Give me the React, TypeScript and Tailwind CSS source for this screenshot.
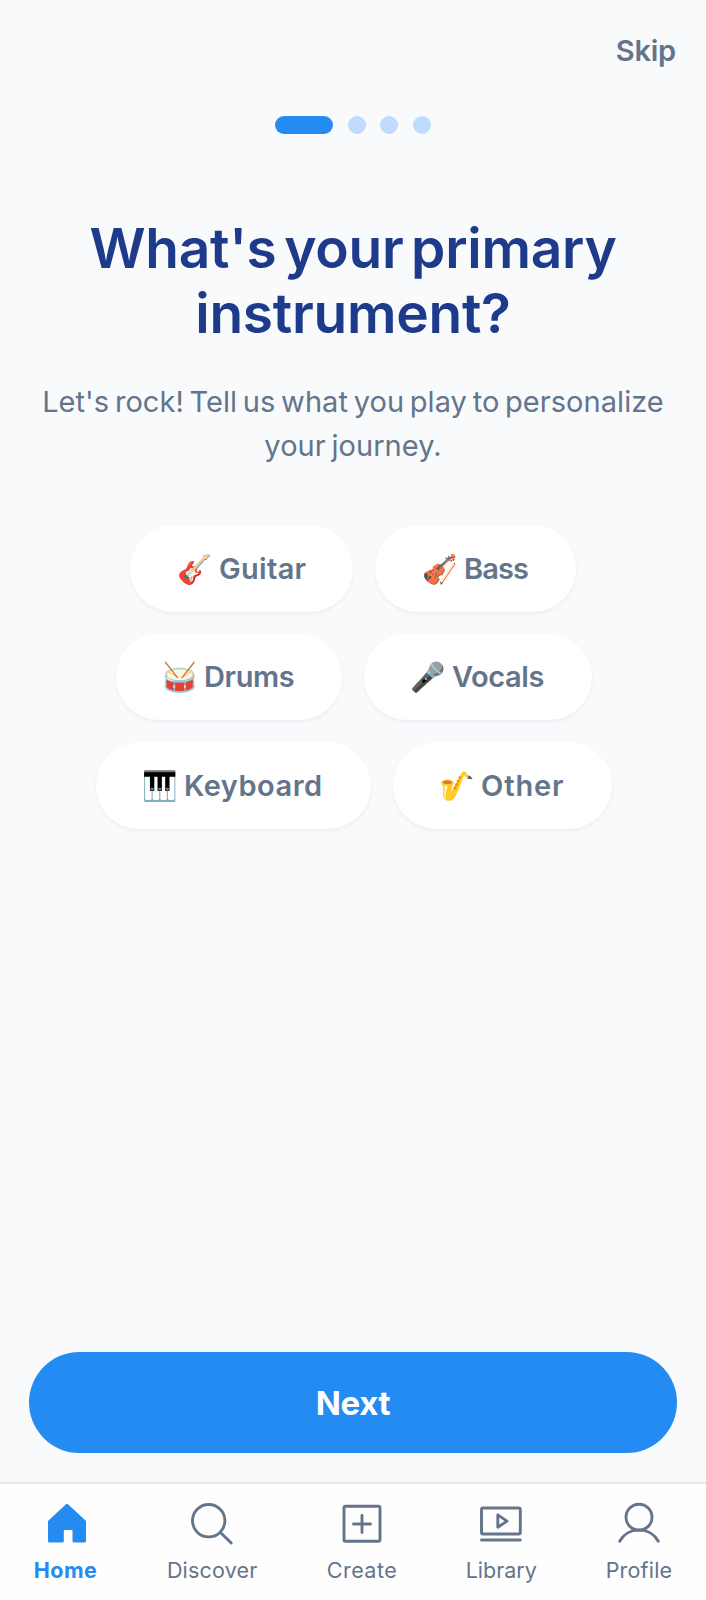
import type { ReactNode } from "react";

const chipRows = [
  {
    offset: "",
    chips: [
      { emoji: "🎸", label: "Guitar", box: "w-[223px] pl-[47px]", text: "tracking-[0.3px]" },
      { emoji: "🎻", label: "Bass", box: "w-[201px] pl-[47px]", text: "tracking-[-0.9px]" },
    ],
  },
  {
    offset: "pl-[2px]",
    chips: [
      { emoji: "🥁", label: "Drums", box: "w-[226px] pl-[46px]", text: "tracking-[-0.4px]" },
      { emoji: "🎤", label: "Vocals", box: "w-[228px] pl-[46px]", text: "tracking-[-0.4px]" },
    ],
  },
  {
    offset: "pl-[2px]",
    chips: [
      { emoji: "🎹", label: "Keyboard", box: "w-[275px] pl-[46px]", text: "tracking-[0.5px]" },
      { emoji: "🎷", label: "Other", box: "w-[219px] pl-[46px]", text: "tracking-[0.9px]" },
    ],
  },
];

function Icon({ children }: { children: ReactNode }) {
  return (
    <svg
      className="h-[44px] w-[44px] shrink-0"
      viewBox="0 0 44 44"
      fill="none"
      stroke="currentColor"
      strokeWidth="2.9"
      strokeLinecap="round"
      strokeLinejoin="round"
    >
      {children}
    </svg>
  );
}

const tabs = [
  {
    label: "Home",
    box: "w-[65px]",
    text: "font-bold text-[#248bf2] tracking-[0.4px]",
    icon: (
      <path
        d="M23 3.400 40.500 19.500V39H30V28.500a2 2 0 0 0-2-2H20.300a2 2 0 0 0-2 2V39H5.500V19.500Z"
        fill="currentColor"
        strokeWidth="3"
      />
    ),
  },
  {
    label: "Discover",
    box: "w-[91px]",
    text: "text-[#64748b] tracking-[0.2px]",
    icon: (
      <>
        <circle cx="18.700" cy="18.700" r="16.200" />
        <path d="M30.200 30.200 41.200 41" />
      </>
    ),
  },
  {
    label: "Create",
    box: "w-[71px]",
    text: "text-[#64748b] tracking-[0.5px]",
    icon: (
      <>
        <rect x="4" y="4.300" width="36" height="35" rx="1.500" />
        <path d="M22 13.500v17M13.500 22h17" />
      </>
    ),
  },
  {
    label: "Library",
    box: "w-[70px]",
    text: "text-[#64748b]",
    icon: (
      <>
        <rect x="2.500" y="6" width="38.800" height="26" rx="1.500" />
        <path d="M2.500 38h38.800M18.800 12.900v12.300l9.200-6.100Z" />
      </>
    ),
  },
  {
    label: "Profile",
    box: "w-[68px]",
    text: "text-[#64748b] tracking-[0.2px]",
    icon: (
      <>
        <circle cx="22" cy="15.200" r="13" />
        <path d="M2.700 39.300a22 22 0 0 1 38.600 0" />
      </>
    ),
  },
];

export default function App() {
  return (
    <div className="flex h-[1600px] w-[706px] flex-col overflow-hidden bg-[#f9fafc] font-['Inter',sans-serif] text-[#64748b]">
      <header className="flex h-[116px] shrink-0 justify-end pr-[30px] pt-[30px]">
        <button className="h-[42px] text-[29px] font-semibold leading-[42px] tracking-[-0.2px]">Skip</button>
      </header>

      <div className="flex h-[18px] shrink-0 justify-center gap-[14.4px]">
        <span className="w-[58px] rounded-full bg-[#248bf2]" />
        <span className="w-[18px] rounded-full bg-[#bfdbfe]" />
        <span className="w-[18px] rounded-full bg-[#bfdbfe]" />
        <span className="w-[18px] rounded-full bg-[#bfdbfe]" />
      </div>

      <h1 className="mt-[82px] text-center text-[55px] font-semibold leading-[65px] tracking-[-0.250px] text-[#1e3a8a] [word-spacing:-6px]">
        <span className="block">What's your primary</span>
        <span className="block">instrument?</span>
      </h1>

      <p className="mt-[34px] text-center text-[29px] font-normal leading-[43.500px] tracking-[0.050px] [word-spacing:-2.500px]">
        <span className="block">Let's rock! Tell us what you play to personalize</span>
        <span className="block">your journey.</span>
      </p>

      <div className="mt-[58px] flex flex-col gap-[22px]">
        {chipRows.map((row, i) => (
          <div key={i} className={`flex justify-center gap-[22px] ${row.offset}`}>
            {row.chips.map((chip) => (
              <button
                key={chip.label}
                className={`flex h-[86.600px] items-center rounded-full bg-white text-[29px] font-semibold shadow-[0_2px_4px_rgba(15,23,42,0.05)] ${chip.box}`}
              >
                <span className="w-[42px] shrink-0 pt-[3px] text-left font-['Noto_Color_Emoji',sans-serif] text-[28.500px] leading-[40px]">
                  {chip.emoji}
                </span>
                <span className={`whitespace-nowrap ${chip.text}`}>{chip.label}</span>
              </button>
            ))}
          </div>
        ))}
      </div>

      <div className="mt-auto shrink-0 px-[29px] pb-[29px]">
        <button className="block h-[101px] w-full rounded-full bg-[#248bf2] text-[33px] font-bold leading-[103px] tracking-[-0.300px] text-white">
          Next
        </button>
      </div>

      <nav className="flex h-[118px] shrink-0 justify-between border-t-2 border-[#e5e9ee] bg-[#fefefe] pl-[33px] pr-[33px] pt-[18px]">
        {tabs.map((tab) => (
          <div key={tab.label} className={`flex flex-col items-center ${tab.box} ${tab.text}`}>
            <Icon>{tab.icon}</Icon>
            <span className="mt-[9px] whitespace-nowrap text-[21.500px] leading-[30px]">{tab.label}</span>
          </div>
        ))}
      </nav>
    </div>
  );
}
